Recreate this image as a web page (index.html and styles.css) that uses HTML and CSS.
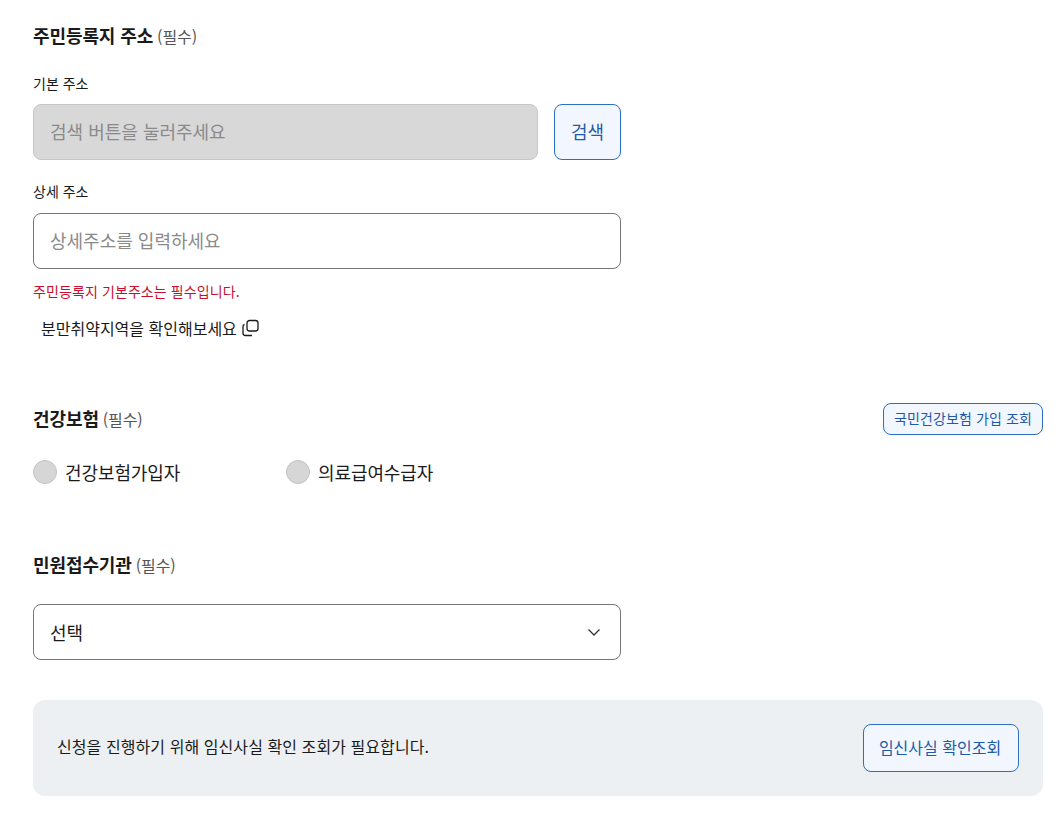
FILE: index.html
```html
<!DOCTYPE html>
<html lang="ko">
<head>
  <meta charset="UTF-8" />
  <meta name="viewport" content="width=device-width, initial-scale=1" />
  <title>신청서</title>
  <link rel="stylesheet" href="styles.css">
</head>
<body>

<div class="container">
  <section class="address">
    <h2 class="title">주민등록지 주소 <span class="req">(필수)</span></h2>

    <label class="field-label" for="addr1">기본 주소</label>
    <div class="addr-row">
      <input type="text" class="text-input disabled" id="addr1" placeholder="검색 버튼을 눌러주세요" disabled />
      <button type="button" class="btn btn-search">검색</button>
    </div>

    <label class="field-label field-label-2" for="addr2">상세 주소</label>
    <input type="text" class="text-input" id="addr2" placeholder="상세주소를 입력하세요" />

    <p class="error">주민등록지 기본주소는 필수입니다.</p>

    <a class="ext-link" href="#">분만취약지역을 확인해보세요
      <svg width="18" height="18" viewBox="0 0 18 18" fill="none" stroke="#1a1a1a" stroke-width="1.3">
        <rect x="6" y="1.5" width="11" height="10.5" rx="2.5" />
        <path d="M3.5 5.5 A2 2 0 0 0 2 7.5 V14 A2.5 2.5 0 0 0 4.5 16.5 H11" />
      </svg>
    </a>
  </section>

  <section class="insurance">
    <div class="title-row">
      <h2 class="title">건강보험 <span class="req">(필수)</span></h2>
      <button type="button" class="btn btn-small">국민건강보험 가입 조회</button>
    </div>
    <div class="radios">
      <label class="radio"><span class="dot"></span>건강보험가입자</label>
      <label class="radio"><span class="dot"></span>의료급여수급자</label>
    </div>
  </section>

  <section class="agency">
    <h2 class="title">민원접수기관 <span class="req">(필수)</span></h2>
    <div class="select">
      <span>선택</span>
      <svg width="16" height="16" viewBox="0 0 16 16" fill="none" stroke="#333" stroke-width="1.3">
        <path d="M2.5 5.5 L8 11 L13.5 5.5" />
      </svg>
    </div>
  </section>

  <div class="notice">
    <p>신청을 진행하기 위해 임신사실 확인 조회가 필요합니다.</p>
    <button type="button" class="btn btn-check">임신사실 확인조회</button>
  </div>
</div>

</body>
</html>
```

FILE: styles.css
```css
* {
  box-sizing: border-box;
}
body {
  font-family: "Noto Sans CJK KR", "Noto Sans", sans-serif;
  background-color: #fff;
  color: #1a1a1a;
  margin: 0;
  padding: 0;
}
.container {
  width: 1010px;
  margin-left: 33px;
  padding-top: 22px;
}
.title {
  margin: 0;
  font-size: 18px;
  line-height: 26px;
  font-weight: 700;
  letter-spacing: -0.1px;
}
.req {
  margin-left: -1px;
  font-size: 16px;
  font-weight: 400;
  color: #555;
  letter-spacing: -0.1px;
}
.field-label {
  display: block;
  margin-top: 24px;
  margin-bottom: 11px;
  font-size: 14px;
  line-height: 20px;
}
.field-label-2 {
  margin-top: 21px;
  margin-bottom: 12px;
}
.addr-row {
  display: flex;
  gap: 16px;
  width: 588px;
}
.text-input {
  display: block;
  width: 588px;
  height: 56px;
  padding: 0 16px 2px;
  font-family: inherit;
  font-size: 18px;
  border: 1px solid #767676;
  border-radius: 8px;
  background: #fff;
  outline: none;
}
.text-input::placeholder {
  color: #8a8a8a;
  opacity: 1;
}
.text-input.disabled {
  flex: 1;
  width: auto;
  min-width: 0;
  background: #d8d8d8;
  border-color: #c6c6c6;
}
.btn {
  font-family: inherit;
  color: #1f5aa8;
  background: #f2f7ff;
  border: 1px solid #2b6fc4;
  border-radius: 8px;
  cursor: pointer;
  padding: 0 0 2px;
}
.btn-search {
  width: 67px;
  height: 56px;
  font-size: 18px;
}
.btn-small {
  width: 160px;
  height: 32px;
  font-size: 14px;
  letter-spacing: 0.1px;
}
.btn-check {
  width: 156px;
  height: 48px;
  padding-right: 2px;
  font-size: 16px;
}
.error {
  margin: 12px 0 0;
  font-size: 14px;
  line-height: 20px;
  color: #c8102e;
  letter-spacing: 0.1px;
}
.ext-link {
  display: flex;
  align-items: center;
  gap: 4px;
  margin: 16px 0 0 8px;
  font-size: 16px;
  line-height: 22px;
  color: #1a1a1a;
  text-decoration: none;
}
.insurance {
  margin-top: 64px;
}
.title-row {
  display: flex;
  justify-content: space-between;
  align-items: center;
  height: 32px;
}
.title-row .title {
  margin-bottom: 2px;
}
.radios {
  display: flex;
  margin-top: 19px;
}
.radio {
  display: flex;
  align-items: center;
  gap: 8px;
  width: 253px;
  height: 36px;
  font-size: 18px;
  letter-spacing: -0.1px;
}
.dot {
  width: 24px;
  height: 24px;
  border-radius: 50%;
  background: #d6d6d6;
  border: 1px solid #c4c4c4;
}
.agency {
  margin-top: 61px;
}
.select {
  display: flex;
  justify-content: space-between;
  align-items: center;
  width: 588px;
  height: 56px;
  margin-top: 26px;
  padding: 0 18px 0 16px;
  font-size: 18px;
  border: 1px solid #767676;
  border-radius: 8px;
}
.notice {
  display: flex;
  justify-content: space-between;
  align-items: center;
  height: 96px;
  margin-top: 40px;
  padding: 0 24px;
  background: #edf0f3;
  border-radius: 12px;
}
.notice p {
  margin: 0 0 4px;
  font-size: 16px;
  letter-spacing: 0.07px;
}
```
